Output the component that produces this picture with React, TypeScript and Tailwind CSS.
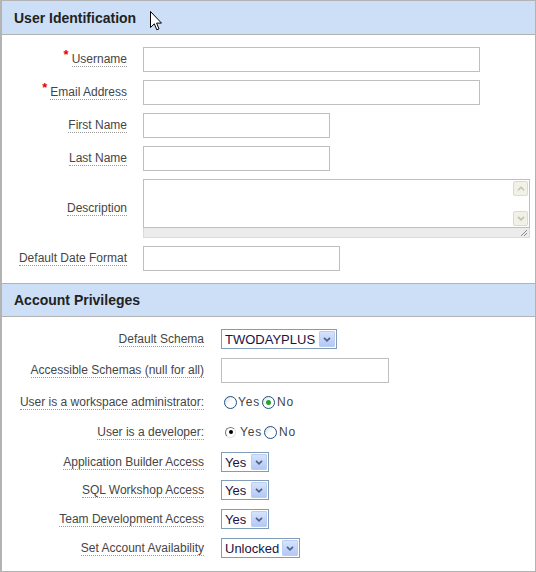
import type { ReactNode } from "react";

function Label({ text, required }: { text: string; required?: boolean }) {
  return (
    <div className="flex items-center justify-end">
      {required && (
        <span className="relative -top-[5px] mr-[3px] text-[13px] font-bold leading-none text-[#e60000]">*</span>
      )}
      <span className="whitespace-nowrap border-b border-dotted border-[#9a9a9a] text-[12px] leading-[14px] text-[#454545]">
        {text}
      </span>
    </div>
  );
}

function TextBox({ className }: { className: string }) {
  return <div className={`h-[25px] border border-[#bfbfbf] bg-white ${className}`} />;
}

function Chevron({ color }: { color: string }) {
  return (
    <svg width="8" height="5" viewBox="0 0 8 5">
      <path d="M1 0.8l3 3 3-3" stroke={color} strokeWidth="1.7" fill="none" />
    </svg>
  );
}

function Select({ value, className }: { value: string; className: string }) {
  return (
    <div className={`flex h-[20px] items-center border border-[#7f9db9] bg-white ${className}`}>
      <span className="pl-[3px] text-[13px] leading-none text-[#1d1242]">{value}</span>
      <span className="ml-auto mr-[1px] flex h-[16px] w-[16px] items-center justify-center rounded-[1px] border border-[#bccdf3] bg-gradient-to-b from-[#d6e3fd] to-[#b3c8f4]">
        <Chevron color="#4d6185" />
      </span>
    </div>
  );
}

function Radio({ checked, classic }: { checked?: boolean; classic?: boolean }) {
  if (classic) {
    return (
      <span className="flex h-[11px] w-[11px] items-center justify-center rounded-full border border-b-[#e4e4e4] border-l-[#7a7a7a] border-r-[#e4e4e4] border-t-[#7a7a7a] bg-white">
        {checked && <span className="h-[4px] w-[4px] rounded-full bg-black" />}
      </span>
    );
  }
  return (
    <span className="flex h-[13px] w-[13px] items-center justify-center rounded-full border border-[#1c5180] bg-gradient-to-br from-[#dcdcd6] via-white to-white">
      {checked && <span className="h-[5px] w-[5px] rounded-full bg-[#2aa12a]" />}
    </span>
  );
}

function RadioPair({ yes }: { yes: boolean }) {
  return (
    <div className="flex items-center text-[12px] leading-none tracking-[0.8px] text-[#454545]">
      {yes ? (
        <span className="ml-[4px] mr-[4px]">
          <Radio classic checked />
        </span>
      ) : (
        <span className="ml-[3px] mr-[1px]">
          <Radio />
        </span>
      )}
      <span>Yes</span>
      <span className="ml-[2px] mr-[2px]">
        <Radio checked={!yes} />
      </span>
      <span>No</span>
    </div>
  );
}

function Row1({ label, required, children }: { label: string; required?: boolean; children: ReactNode }) {
  return (
    <div className="grid grid-cols-[125px_1fr] items-center gap-x-[16px]">
      <Label text={label} required={required} />
      <div>{children}</div>
    </div>
  );
}

function Row2({ label, children, className = "" }: { label: string; children: ReactNode; className?: string }) {
  return (
    <div className={`grid grid-cols-[202px_1fr] items-center gap-x-[17px] ${className}`}>
      <Label text={label} />
      <div>{children}</div>
    </div>
  );
}

function DescriptionBox() {
  return (
    <div className="flex w-[387px] flex-col">
      <div className="flex h-[49px] border border-[#bfbfbf] bg-white">
        <div className="flex-1" />
        <div className="flex w-[16px] flex-col justify-between py-[1px]">
          <span className="flex h-[15px] w-[15px] items-center justify-center rounded-[2px] border border-[#dcdccc] bg-[#f1f1e8]">
            <svg width="8" height="5" viewBox="0 0 8 5">
              <path d="M1 4.2l3-3 3 3" stroke="#c2c2b4" strokeWidth="1.5" fill="none" />
            </svg>
          </span>
          <span className="flex h-[15px] w-[15px] items-center justify-center rounded-[2px] border border-[#dcdccc] bg-[#f1f1e8]">
            <Chevron color="#c2c2b4" />
          </span>
        </div>
      </div>
      <div className="flex h-[10px] items-end justify-end border-b border-l border-r border-[#dadada] bg-[#ececec] pr-[1px]">
        <svg width="8" height="8" viewBox="0 0 8 8">
          <path d="M7 1L1 7M7 4L4 7" stroke="#8a8a8a" strokeWidth="1" />
        </svg>
      </div>
    </div>
  );
}

function Cursor() {
  return (
    <svg className="absolute left-[148px] top-[11px]" width="12" height="20" viewBox="0 0 12 20">
      <path
        d="M0.5 0.5V16.5L4.3 12.8L6.8 18.8L9 17.9L6.6 12.1H11.5Z"
        fill="white"
        stroke="black"
        strokeWidth="1"
        strokeLinejoin="miter"
      />
    </svg>
  );
}

export default function App() {
  return (
    <div className="relative h-[572px] w-[536px] overflow-hidden border-b border-l-2 border-r border-[#b3b3b3] bg-white font-['Liberation_Sans',Arial,sans-serif]">
      <div className="flex h-[35px] items-center border-y border-[#b3b3b3] bg-[#cddff6] pl-[12px] pt-[1px] text-[14px] font-bold text-[#222]">
        User Identification
      </div>
      <div className="flex flex-col gap-[8px] pb-[12px] pt-[12px]">
        <Row1 label="Username" required>
          <TextBox className="w-[337px]" />
        </Row1>
        <Row1 label="Email Address" required>
          <TextBox className="w-[337px]" />
        </Row1>
        <Row1 label="First Name">
          <TextBox className="w-[187px]" />
        </Row1>
        <Row1 label="Last Name">
          <TextBox className="w-[187px]" />
        </Row1>
        <Row1 label="Description">
          <DescriptionBox />
        </Row1>
        <Row1 label="Default Date Format">
          <TextBox className="w-[197px]" />
        </Row1>
      </div>

      <div className="flex h-[34px] items-center border-y border-[#b3b3b3] bg-[#cddff6] pl-[12px] text-[14px] font-bold text-[#222]">
        Account Privileges
      </div>
      <div className="flex flex-col pt-[12px]">
        <Row2 label="Default Schema">
          <Select value="TWODAYPLUS" className="w-[116px]" />
        </Row2>
        <Row2 label="Accessible Schemas (null for all)" className="mt-[9px]">
          <TextBox className="w-[168px]" />
        </Row2>
        <Row2 label="User is a workspace administrator:" className="mt-[9px] h-[20px]">
          <RadioPair yes={false} />
        </Row2>
        <Row2 label="User is a developer:" className="mt-[10px] h-[20px]">
          <RadioPair yes />
        </Row2>
        <Row2 label="Application Builder Access" className="mt-[10px]">
          <Select value="Yes" className="w-[48px]" />
        </Row2>
        <Row2 label="SQL Workshop Access" className="mt-[8px]">
          <Select value="Yes" className="w-[48px]" />
        </Row2>
        <Row2 label="Team Development Access" className="mt-[9px]">
          <Select value="Yes" className="w-[48px]" />
        </Row2>
        <Row2 label="Set Account Availability" className="mt-[9px]">
          <Select value="Unlocked" className="w-[79px]" />
        </Row2>
      </div>
      <Cursor />
    </div>
  );
}
